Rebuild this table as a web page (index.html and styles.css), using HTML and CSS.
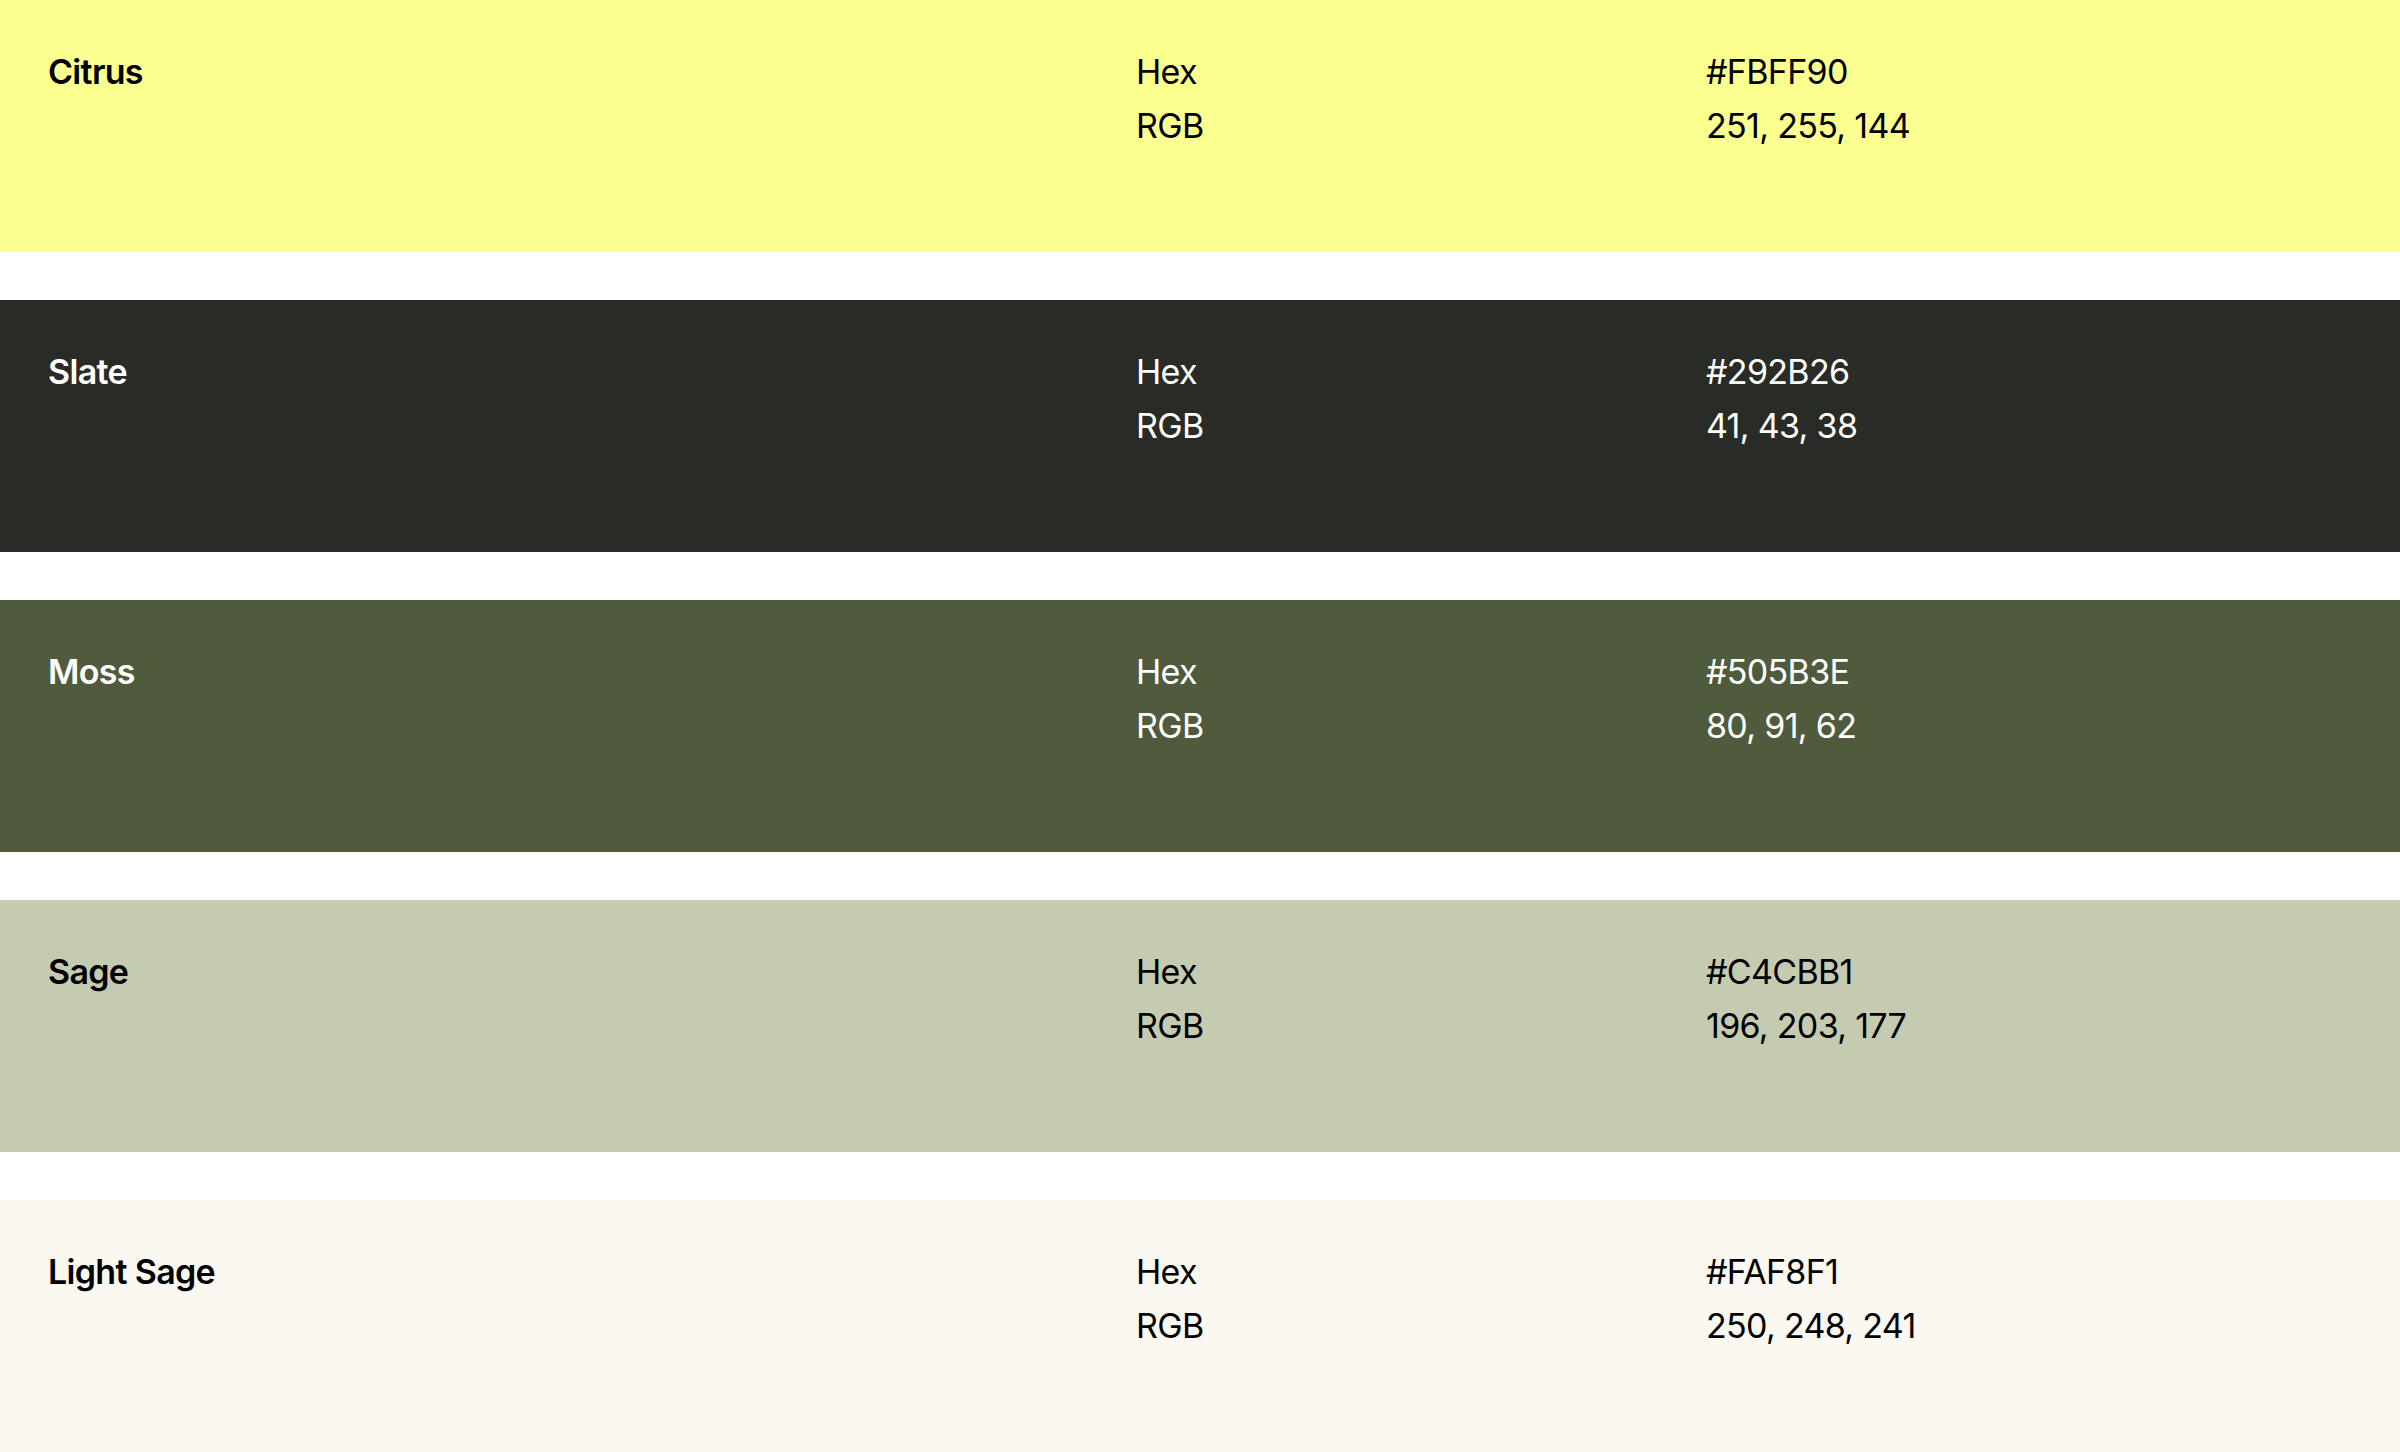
FILE: index.html
```html
<!DOCTYPE html>
<html lang="en">
<head>
<meta charset="utf-8">
<title>Palette</title>
<link rel="stylesheet" href="styles.css">
</head>
<body>
<main class="palette">
  <section class="swatch citrus">
    <div class="name">Citrus</div>
    <div class="keys"><div>Hex</div><div>RGB</div></div>
    <div class="vals"><div>#FBFF90</div><div>251, 255, 144</div></div>
  </section>
  <section class="swatch slate">
    <div class="name">Slate</div>
    <div class="keys"><div>Hex</div><div>RGB</div></div>
    <div class="vals"><div>#292B26</div><div>41, 43, 38</div></div>
  </section>
  <section class="swatch moss">
    <div class="name">Moss</div>
    <div class="keys"><div>Hex</div><div>RGB</div></div>
    <div class="vals"><div>#505B3E</div><div>80, 91, 62</div></div>
  </section>
  <section class="swatch sage">
    <div class="name">Sage</div>
    <div class="keys"><div>Hex</div><div>RGB</div></div>
    <div class="vals"><div>#C4CBB1</div><div>196, 203, 177</div></div>
  </section>
  <section class="swatch light-sage">
    <div class="name">Light Sage</div>
    <div class="keys"><div>Hex</div><div>RGB</div></div>
    <div class="vals"><div>#FAF8F1</div><div>250, 248, 241</div></div>
  </section>
</main>
</body>
</html>
```
FILE: styles.css
```css
* { box-sizing: border-box; }
html, body { margin: 0; padding: 0; background: #ffffff; }
body {
  font-family: Inter, "Liberation Sans", sans-serif;
  font-size: 34px;
  line-height: 54px;
  color: #000;
}
.palette {
  display: flex;
  flex-direction: column;
  gap: 48px;
}
.swatch {
  height: 252px;
  padding: 45px 48px 0 48px;
  display: grid;
  grid-template-columns: 1088px 570px 1fr;
  align-items: start;
  letter-spacing: -0.02em;
}
.name { font-weight: 600; }
.keys, .vals { font-weight: 400; }
.citrus { background: #FBFF90; color: #000; }
.slate { background: #292B26; color: #fff; }
.moss { background: #505B3E; color: #fff; }
.sage { background: #C4CBB1; color: #000; }
.light-sage { background: #FAF8F1; color: #000; }
```
